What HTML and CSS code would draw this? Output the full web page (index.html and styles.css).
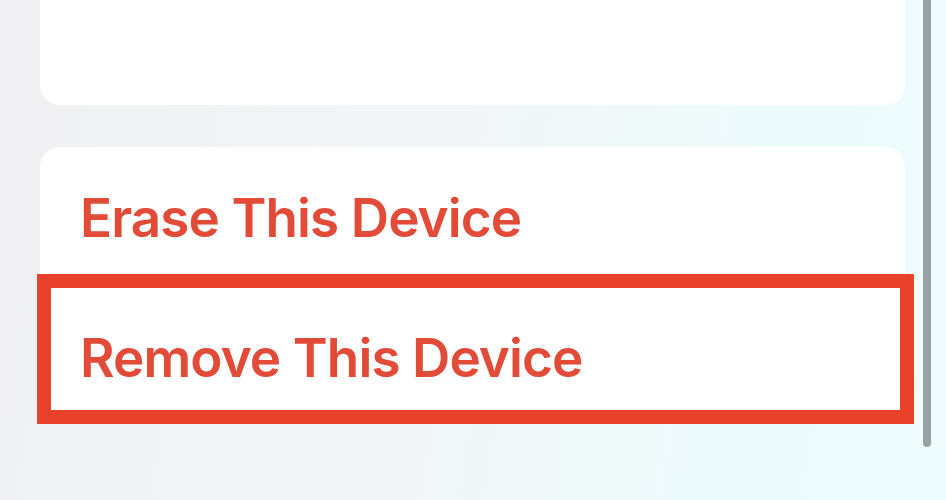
FILE: index.html
```html
<!DOCTYPE html>
<html lang="en">
<head>
    <meta charset="UTF-8">
    <title>Device</title>
    <link rel="stylesheet" href="styles.css">
</head>
<body>
<div class="screen">
    <div class="list">
        <div class="card card-top"></div>
        <div class="card card-actions">
            <div class="row"><span>Erase This Device</span></div>
            <div class="row marked"><span>Remove This Device</span></div>
        </div>
    </div>
    <div class="scroll"></div>
</div>
</body>
</html>
```
FILE: styles.css
```css
*{
    margin: 0;
    padding: 0;
    box-sizing: border-box;
}
body{
    width: 946px;
    height: 500px;
    overflow: hidden;
    font-family: Inter, "Liberation Sans", sans-serif;
    background: #f1f2f3;
    background: linear-gradient(100deg, #f0f0f2 0%, #f3f6f7 45%, #eefbfc 75%, #effcfd 100%);
}
.screen{
    display: flex;
    padding-left: 40px;
}
.list{
    width: 865px;
    display: flex;
    flex-direction: column;
    gap: 42px;
}
.card{
    background: #fff;
    border-radius: 20px;
}
.card-top{
    height: 125px;
    margin-top: -20px;
}
.card-actions{
    height: 272px;
}
.row{
    height: 127px;
    padding-left: 40px;
    padding-top: 43px;
}
.row span{
    display: block;
    font-size: 53px;
    font-weight: 600;
    line-height: 56px;
    color: #e14b38;
    letter-spacing: -0.9px;
}
.row.marked{
    height: 150px;
    margin: 0 -9px 0 -3px;
    padding-left: 29px;
    padding-top: 42px;
    border: 14px solid #e8432a;
    background: #fff;
}
.scroll{
    width: 8px;
    height: 447px;
    margin-left: 18px;
    background: #9ba2a6;
    border-radius: 0 0 4px 4px;
}
```
